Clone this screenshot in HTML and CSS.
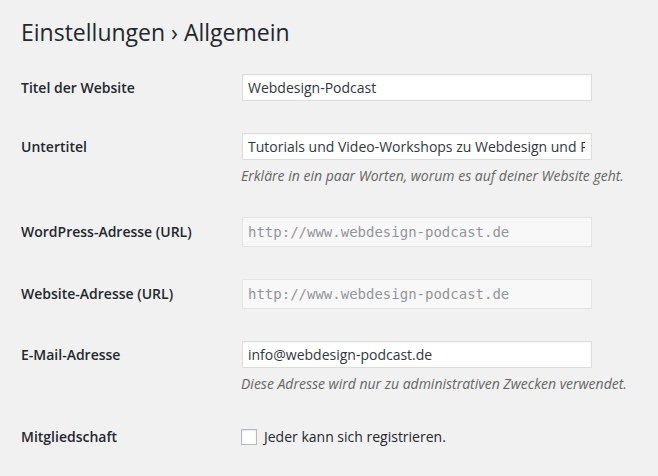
FILE: index.html
```html
<!DOCTYPE html>
<html lang="de">
<head>
<meta charset="utf-8">
<title>Einstellungen › Allgemein</title>
<link rel="stylesheet" href="styles.css">
</head>
<body>
<div class="wrap">
  <h1 class="title">Einstellungen › Allgemein</h1>
  <div class="form">
    <div class="row">
      <div class="label">Titel der Website</div>
      <div class="field"><div class="input">Webdesign-Podcast</div></div>
    </div>
    <div class="row">
      <div class="label">Untertitel</div>
      <div class="field">
        <div class="input"><span class="clip">Tutorials und Video-Workshops zu Webdesign und Programmierung</span></div>
        <p class="desc">Erkläre in ein paar Worten, worum es auf deiner Website geht.</p>
      </div>
    </div>
    <div class="row">
      <div class="label tall">WordPress-Adresse (URL)</div>
      <div class="field"><div class="input disabled">http://www.webdesign-podcast.de</div></div>
    </div>
    <div class="row">
      <div class="label tall">Website-Adresse (URL)</div>
      <div class="field"><div class="input disabled">http://www.webdesign-podcast.de</div></div>
    </div>
    <div class="row">
      <div class="label">E-Mail-Adresse</div>
      <div class="field">
        <div class="input">info@webdesign-podcast.de</div>
        <p class="desc">Diese Adresse wird nur zu administrativen Zwecken verwendet.</p>
      </div>
    </div>
    <div class="row check-row">
      <div class="label short">Mitgliedschaft</div>
      <div class="field">
        <label class="check"><span class="box"></span><span>Jeder kann sich registrieren.</span></label>
      </div>
    </div>
  </div>
</div>
</body>
</html>
```

FILE: styles.css
```css
html, body {
  margin: 0;
  padding: 0;
  background: #f1f1f1;
}
body {
  font-family: "Open Sans", "Noto Sans", sans-serif;
  color: #23282d;
  font-size: 14px;
}
.wrap {
  padding: 0 0 0 21px;
}
.title {
  margin: 0;
  padding-top: 16px;
  font-size: 23px;
  font-weight: 400;
  line-height: 32px;
  color: #23282d;
}
.form {
  padding-top: 10px;
}
.row {
  display: grid;
  grid-template-columns: 221px 350px;
  padding: 16px 0;
  align-items: start;
}
.label {
  font-weight: 600;
  font-size: 14px;
  line-height: 27px;
}
.label.tall {
  line-height: 30px;
}
.label.short {
  line-height: 16px;
}
.input {
  box-sizing: border-box;
  height: 27px;
  width: 350px;
  border: 1px solid #dddddd;
  background: #ffffff;
  padding: 0 6px 0 5px;
  font-size: 14px;
  line-height: 25px;
  color: #32373c;
  white-space: nowrap;
  overflow: hidden;
  box-shadow: inset 0 1px 2px rgba(0,0,0,0.04);
}
.clip {
  display: block;
  overflow: hidden;
}
.input.disabled {
  height: 30px;
  line-height: 28px;
  background: #f8f8f8;
  border-color: #e4e4e4;
  color: #939699;
  font-family: "DejaVu Sans Mono", monospace;
  font-size: 14px;
  box-shadow: none;
}
.desc {
  margin: 6px 0 0 -1px;
  font-size: 14px;
  font-style: italic;
  line-height: 19px;
  color: #666666;
  white-space: nowrap;
}
.check-row {
  padding-top: 20px;
}
.check {
  display: flex;
  align-items: center;
  gap: 7px;
  margin-left: -1px;
  line-height: 16px;
}
.box {
  box-sizing: border-box;
  width: 16px;
  height: 16px;
  border: 1px solid #b4b9be;
  background: #ffffff;
  box-shadow: inset 0 1px 2px rgba(0,0,0,0.1);
}
```
